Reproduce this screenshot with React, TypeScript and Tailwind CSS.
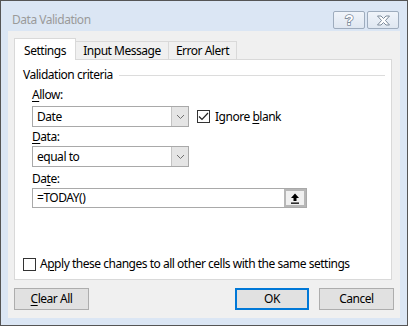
import type { ReactNode } from "react";

function U({ children }: { children: ReactNode }) {
  return <span className="underline underline-offset-[2px] decoration-[1px]">{children}</span>;
}

function Chevron() {
  return (
    <svg width="9" height="6" viewBox="0 0 9 6" className="block">
      <path d="M1 1 L4.5 4.5 L8 1" fill="none" stroke="#707070" strokeWidth="1" />
    </svg>
  );
}

function Combo({ value, width }: { value: string; width: string }) {
  return (
    <div className={`flex h-[21px] ${width} border border-[#a9a9a9] bg-white`}>
      <div className="flex flex-1 items-center pl-[4px]">{value}</div>
      <div className="flex w-[17px] items-center justify-center border-l border-[#c4c4c4] bg-[#e5e5e5]">
        <Chevron />
      </div>
    </div>
  );
}

function TitleButton({ children }: { children: ReactNode }) {
  return (
    <div className="flex h-[18px] w-[32px] items-center justify-center rounded-[2px] border border-[#9eacbd] bg-gradient-to-b from-[#f0f4fa] to-[#dfe7f1]">
      {children}
    </div>
  );
}

export default function App() {
  return (
    <div className="flex h-[326px] w-[408px] flex-col border border-[#555555] bg-[#dbe6f4] font-['Noto_Sans',sans-serif] text-[12px] leading-[16px] tracking-[-0.48px] text-black">
      {/* title bar */}
      <div className="flex h-[30px] pl-[11px] pr-[8px]">
        <span className="mt-[11px] text-[#9a9a9a]">Data Validation</span>
        <div className="ml-auto mt-[10px] flex gap-[2px]">
          <TitleButton>
            <svg width="12" height="14" viewBox="0 0 12 14">
              <text
                x="6"
                y="12"
                textAnchor="middle"
                fontSize="14"
                fontWeight="bold"
                fontFamily="Liberation Sans, sans-serif"
                fill="#ffffff"
                stroke="#7d8b9b"
                strokeWidth="1.6"
                paintOrder="stroke"
              >
                ?
              </text>
            </svg>
          </TitleButton>
          <TitleButton>
            <svg width="15" height="11" viewBox="0 0 15 11">
              <path
                d="M1.5 1 L5 1 L7.5 3.5 L10 1 L13.5 1 L9.5 5.5 L13.5 10 L10 10 L7.5 7.5 L5 10 L1.5 10 L5.5 5.5 Z"
                fill="#ffffff"
                stroke="#7d8b9b"
                strokeWidth="1"
                strokeLinejoin="round"
              />
            </svg>
          </TitleButton>
        </div>
      </div>

      {/* client area */}
      <div className="mx-[7px] flex h-[287px] flex-col bg-[#f0f0f0] pl-[6px] pt-[7px]">
        {/* tabs */}
        <div className="flex h-[21px] items-end">
          <div className="relative z-10 -mb-px flex h-[22px] w-[62px] justify-center border border-b-0 border-[#d9d9d9] bg-white pt-[4px]">
            Settings
          </div>
          <div className="-ml-px flex h-[18px] w-[94px] justify-center border border-b-0 border-[#d9d9d9] bg-[#f0f0f0] pt-[1px]">
            Input Message
          </div>
          <div className="-ml-px flex h-[18px] w-[69px] justify-center border border-b-0 border-[#d9d9d9] bg-[#f0f0f0] pt-[1px]">
            Error Alert
          </div>
        </div>

        {/* tab panel */}
        <div className="flex h-[221px] w-[378px] flex-col border border-[#d9d9d9] bg-white pl-[8px] pt-[7px]">
          <div className="flex h-[16px] items-center pr-[6px]">
            <span>Validation criteria</span>
            <div className="ml-[6px] h-px flex-1 bg-[#dcdcdc]" />
          </div>

          <div className="flex flex-col pl-[9px]">
            <div className="mt-[4px] h-[16px]">
              <U>A</U>llow:
            </div>
            <div className="mt-[3px] flex items-center">
              <Combo value="Date" width="w-[157px]" />
              <div className="ml-[8px] flex items-center">
                <div className="flex h-[13px] w-[13px] items-center justify-center border border-[#333333] bg-white">
                  <svg width="11" height="9" viewBox="0 0 11 9">
                    <path d="M1 4.5 L4 7.5 L10 1" fill="none" stroke="#222222" strokeWidth="1.2" />
                  </svg>
                </div>
                <span className="ml-[5px]">
                  Ignore <U>b</U>lank
                </span>
              </div>
            </div>

            <div className="mt-[2px] h-[16px]">
              <U>D</U>ata:
            </div>
            <div className="mt-[1px]">
              <Combo value="equal to" width="w-[157px]" />
            </div>

            <div className="mt-[4px] h-[16px]">
              Da<U>t</U>e:
            </div>
            <div className="mt-[1px] flex h-[20px] w-[275px] border border-[#a9a9a9] bg-white">
              <div className="flex flex-1 items-center pl-[4px]">=TODAY()</div>
              <div className="flex w-[22px] items-center justify-center border-2 border-[#b7b7b7] bg-[#f0f0f0]">
                <svg width="10" height="11" viewBox="0 0 10 11">
                  <path d="M5 0.5 L9 5 L6.5 5 L6.5 8 L3.5 8 L3.5 5 L1 5 Z" fill="#000000" />
                  <rect x="1" y="9.5" width="8" height="1.3" fill="#000000" />
                </svg>
              </div>
            </div>
          </div>

          <div className="mt-auto mb-[7px] flex h-[16px] items-center">
            <div className="h-[13px] w-[13px] border border-[#333333] bg-white" />
            <span className="ml-[4px]">
              A<U>p</U>ply these changes to all other cells with the same settings
            </span>
          </div>
        </div>

        {/* buttons */}
        <div className="mt-[8px] flex w-[380px]">
          <button className="flex h-[22px] w-[75px] items-center justify-center border border-[#adadad] bg-[#e1e1e1]">
            <U>C</U>lear All
          </button>
          <button className="ml-auto flex h-[22px] w-[74px] items-center justify-center border-2 border-[#0078d7] bg-[#e1e1e1]">
            OK
          </button>
          <button className="ml-[10px] flex h-[22px] w-[75px] items-center justify-center border border-[#adadad] bg-[#e1e1e1]">
            Cancel
          </button>
        </div>
      </div>
    </div>
  );
}
